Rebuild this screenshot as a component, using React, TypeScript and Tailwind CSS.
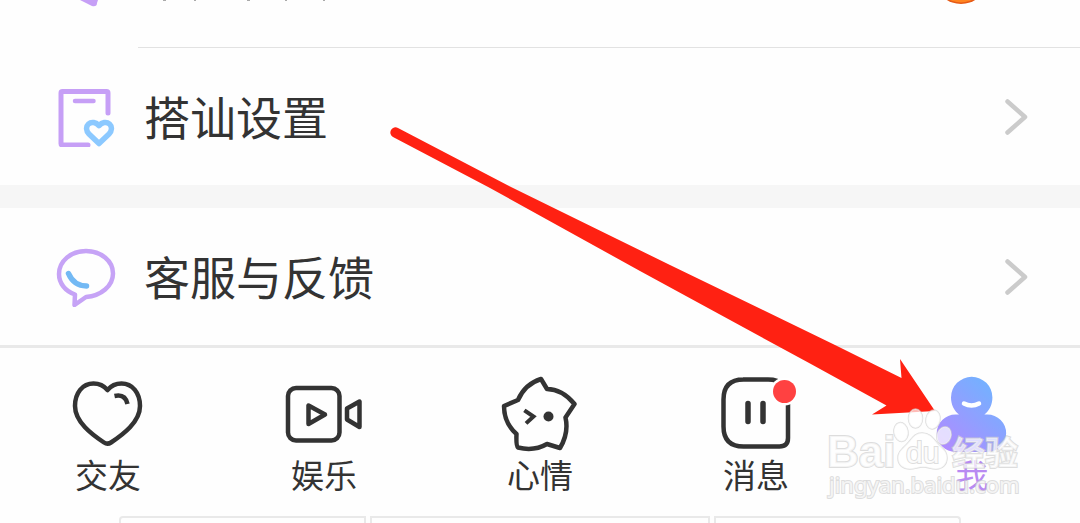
import type { ReactNode } from 'react'

const FONT = "font-['Noto_Sans_CJK_SC',sans-serif]"

function ChevronIcon() {
  return (
    <svg width="24" height="38" viewBox="0 0 24 38" fill="none" aria-hidden="true">
      <path d="M3.500 3.500 21 19 3.500 34.500" stroke="#cbcbcb" strokeWidth="4.500" strokeLinecap="round" strokeLinejoin="round" />
    </svg>
  )
}

function NotebookIcon() {
  return (
    <svg width="60" height="60" viewBox="56 87 60 60" fill="none" strokeLinecap="round" strokeLinejoin="round" aria-hidden="true">
      <path d="M108 113V93q0-1.500-1.500-1.500H62.500q-1.500 0-1.500 1.500v50.500q0 1.500 1.500 1.500h25.500" stroke="#c69ff6" strokeWidth="5" />
      <path d="M75 101h18.500" stroke="#c69ff6" strokeWidth="4.500" />
      <path
        d="M99 143.500 89 134c-3-3-3.300-7.500-.5-10 3-2.700 7.500-1.800 10.500 1.700 3-3.500 7.500-4.400 10.500-1.700 2.800 2.500 2.500 7-.5 10Z"
        stroke="#8cc9ff"
        strokeWidth="5.500"
      />
    </svg>
  )
}

function ChatIcon() {
  return (
    <svg width="60" height="60" viewBox="56 247 60 60" fill="none" strokeLinecap="round" strokeLinejoin="round" aria-hidden="true">
      <path
        d="M75 294.500C65 291 59 283 59 274c0-13 12-23 27-23s27 10 27 22.500S101 296 86 297l-11.500 8Z"
        stroke="#c6a3f6"
        strokeWidth="4.500"
      />
      <path d="M68.500 273.500c3 7 9 12.300 18 12.500" stroke="#73b9f4" strokeWidth="5.500" />
    </svg>
  )
}

function HeartIcon() {
  return (
    <svg width="80" height="80" viewBox="68 372 80 80" fill="none" stroke="#333" strokeWidth="4.500" strokeLinecap="round" strokeLinejoin="round" aria-hidden="true">
      <path d="M107.500 390c-3.500-4.200-8.500-6.500-14-6.500-11 0-18.500 9.500-18.500 22.500 0 16 17 28.500 29 36.500q3.500 2.300 7 0c12-8 29-20.500 29-36.500 0-13-7.500-22.500-18.500-22.500-5.500 0-10.500 2.300-14 6.500Z" />
      <path d="M114.500 396c7-1.500 11.500 1 13 8" strokeLinecap="butt" />
    </svg>
  )
}

function VideoIcon() {
  return (
    <svg width="80" height="80" viewBox="284 372 80 80" fill="none" stroke="#333" strokeWidth="4.500" strokeLinejoin="round" aria-hidden="true">
      <rect x="288" y="388" width="51.500" height="52.500" rx="8" />
      <path d="M308.500 405.500v18.500l16.500-9.500Z" />
      <path d="M347 408.500 359.500 401.500v25.500L347 419.500Z" />
    </svg>
  )
}

function StarIcon() {
  return (
    <svg width="80" height="80" viewBox="500 372 80 80" fill="none" stroke="#333" strokeWidth="4.500" strokeLinecap="round" strokeLinejoin="round" aria-hidden="true">
      <path d="M518 400Q525 384 541 379L547 389Q562 389 574.500 404L565.500 417.500Q569 433 560 448L547 444Q534 451.500 518 447.500Q516 446 516.500 434Q504 423 504 406Z" />
      <path d="M526 411.500 533.500 416.500 527.500 422" strokeWidth="4" strokeLinecap="square" strokeLinejoin="miter" />
      <circle cx="548.500" cy="416.500" r="5" fill="#333" stroke="none" />
    </svg>
  )
}

function MessageIcon() {
  return (
    <svg width="80" height="80" viewBox="716 372 80 80" fill="none" stroke="#333" strokeWidth="4.500" strokeLinecap="round" aria-hidden="true">
      <path d="M743 379.500h25q20 0 20 20v38.500q0 8.500-8.500 8.500H743.500q-20 0-20-20V399.500q0-20 20-20Z" />
      <path d="M748 403.500v18M763 403.500v18" strokeWidth="5.500" />
      <circle cx="784.500" cy="391.500" r="14" fill="#fff" stroke="none" />
      <circle cx="784.500" cy="391.500" r="11.500" fill="#ff4141" stroke="none" />
    </svg>
  )
}

function MeIcon() {
  return (
    <svg width="80" height="80" viewBox="932 372 80 80" fill="none" aria-hidden="true">
      <defs>
        <linearGradient id="me" gradientUnits="userSpaceOnUse" x1="942" y1="448" x2="994" y2="390">
          <stop stopColor="#b18bff" />
          <stop offset="1" stopColor="#75b0ff" />
        </linearGradient>
      </defs>
      <path
        d="M959 414.500c-5-4-8-10-8-17a20.700 20.700 0 0 1 41.400 0c0 7-3 13-8 17h3a18.700 18.700 0 0 1 0 37.500H955.500a18.700 18.700 0 0 1 0-37.500Z"
        fill="url(#me)"
      />
      <path d="M964 403.500q7.500 4 15 0" stroke="#fff" strokeWidth="4.500" strokeLinecap="round" />
    </svg>
  )
}

function SettingRow({ icon, label }: { icon: ReactNode; label: string }) {
  return (
    <button type="button" className="flex h-[137px] w-full items-center gap-7 pl-14 pr-13 text-left">
      {icon}
      <span className="flex-1 pb-1 text-[46px] leading-[56px] text-[#333]">{label}</span>
      <ChevronIcon />
    </button>
  )
}

const tabs = [
  { label: '交友', icon: <HeartIcon /> },
  { label: '娱乐', icon: <VideoIcon /> },
  { label: '心情', icon: <StarIcon /> },
  { label: '消息', icon: <MessageIcon /> },
  { label: '我', icon: <MeIcon />, active: true },
]

function Arrow() {
  return (
    <svg className="pointer-events-none absolute left-0 top-0 h-auto w-full" viewBox="0 0 1080 523" aria-hidden="true">
      <path
        d="M398 128 510 186.500 670 265 835 345 901.500 378 900 359 935 411 872 414.500 886.500 405.500 810 363.500 640 271 490 188 393 137A5 5 0 0 1 398 128Z"
        fill="#ff2112"
      />
    </svg>
  )
}

function Watermark() {
  return (
    <svg
      className="pointer-events-none absolute right-[54px] top-[404px]"
      width="200"
      height="100"
      viewBox="826 404 200 100"
      fill="#fff"
      fillOpacity="0.7"
      stroke="#cfcfcf"
      strokeOpacity="0.7"
      paintOrder="stroke"
    >
      <g strokeWidth="1.500">
        <ellipse cx="901" cy="432" rx="7" ry="9.500" transform="rotate(-10 901 432)" />
        <ellipse cx="915.500" cy="418.500" rx="7" ry="9.500" />
        <ellipse cx="933" cy="419.500" rx="7" ry="9.500" transform="rotate(12 933 419.500)" />
        <ellipse cx="944" cy="435.500" rx="7" ry="9" transform="rotate(20 944 435.500)" />
        <path d="M922 433c-8 0-10 6-15 11-6 6-9 8-9 14 0 7 5 11 12 11 5 0 8-2 13-2s8 2 13 2c7 0 11-5 11-11 0-7-4-9-9-14-5-6-8-11-16-11Z" />
      </g>
      <text x="827" y="467" fontSize="44" className="font-['Liberation_Sans',sans-serif] font-bold" strokeWidth="2">Bai</text>
      <text x="906" y="463" fontSize="30" className="font-['Liberation_Sans',sans-serif]" fillOpacity="0.9" strokeWidth="2">du</text>
      <text x="952" y="465" fontSize="33" className="font-['Noto_Sans_CJK_SC',sans-serif] font-bold" strokeWidth="2">经验</text>
      <text x="829" y="493" fontSize="22" className="font-['Noto_Sans',sans-serif]" strokeWidth="2">jingyan.baidu.com</text>
    </svg>
  )
}

export default function App() {
  return (
    <div className={`relative overflow-hidden bg-[#fefefe] text-[#333] ${FONT}`}>
      {/* tail of the row scrolled off above */}
      <div className="flex h-[47px] items-start justify-between pl-14 pr-[100px]">
        <svg width="280" height="8" viewBox="56 0 280 8" aria-hidden="true">
          <path d="M80 0 92 6q5 1 5-3l1-3Z" fill="#c69ff6" />
          <path d="M163 .5h3M194 .5h2M247 .5h3M285 .5h2M323 .5h2" stroke="#aaa" />
        </svg>
        <svg width="38" height="5" viewBox="942 0 38 5" aria-hidden="true">
          <ellipse cx="961" cy="-15" rx="23" ry="19" fill="#e65a16" />
          <ellipse cx="961" cy="-16" rx="22" ry="18.500" fill="#ff8420" />
        </svg>
      </div>
      <div className="ml-[138px] h-px bg-[#e2e2e2]" />

      <main>
        <SettingRow icon={<NotebookIcon />} label="搭讪设置" />
        <div className="h-[23px] bg-[#f6f6f6]" />
        <SettingRow icon={<ChatIcon />} label="客服与反馈" />
      </main>

      <nav className="grid grid-cols-5 border-t-3 border-[#e9e9e9] pb-[22px] pt-6">
        {tabs.map((tab) => (
          <a key={tab.label} href="#" className="flex flex-col items-center gap-0.5">
            {tab.icon}
            <span className={`text-[33px] leading-10 ${tab.active ? 'text-[#b88af2]' : 'text-[#333]'}`}>{tab.label}</span>
          </a>
        ))}
      </nav>

      <div className="grid h-[7px] grid-cols-[8fr_11fr_8fr] gap-1 px-[119px]">
        <div className="rounded-tl border-x-2 border-t-2 border-[#e9e9e9]" />
        <div className="border-x-2 border-t-2 border-[#e9e9e9]" />
        <div className="rounded-tr border-x-2 border-t-2 border-[#e9e9e9]" />
      </div>

      <Arrow />
      <Watermark />
    </div>
  )
}
